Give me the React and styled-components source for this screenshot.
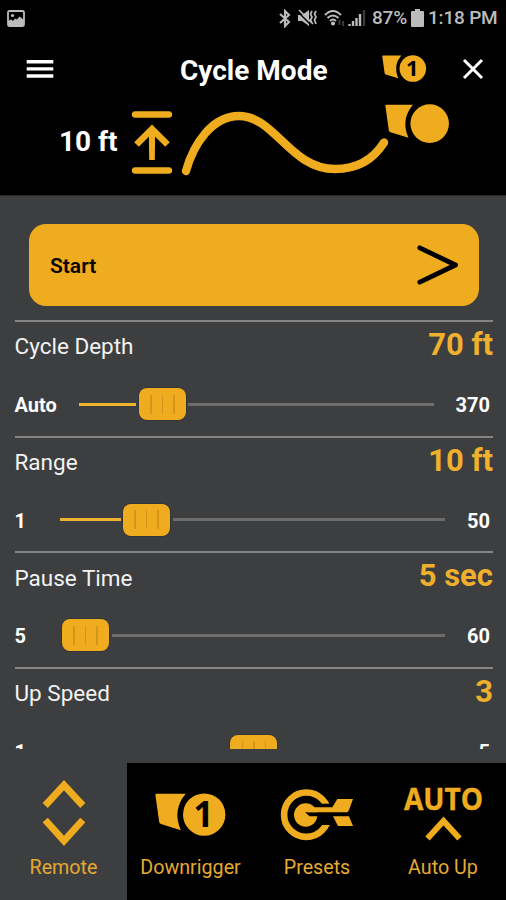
import React from "react";
import styled, {createGlobalStyle} from "styled-components";

const GOLD = "#f0ac1f";
const PANEL = "#3d3e40";

const GlobalStyle = createGlobalStyle`
    * {
        box-sizing: border-box;
    }
    body {
        margin: 0;
        background: ${PANEL};
        font-family: Roboto, "Liberation Sans", sans-serif;
    }
`;

const Screen = styled.div`
    width: 506px;
    height: 900px;
    display: flex;
    flex-direction: column;
    overflow: hidden;
    background: ${PANEL};
`;

const Header = styled.header`
    flex: 0 0 196px;
    background: #000;
    border-bottom: 1px solid #29292a;
    color: #fff;
`;

const StatusBar = styled.div`
    height: 36px;
    padding: 0 9px 0 7px;
    display: flex;
    align-items: center;
    justify-content: space-between;
    color: #bcbcbc;
`;

const StatusGroup = styled.div`
    display: flex;
    align-items: center;
    font-size: 19px;
    line-height: 36px;
    white-space: nowrap;
`;

const StatusText = styled.span`
    width: ${props => props.width}px;
    margin-left: ${props => props.gap}px;
    font-weight: 500;
    letter-spacing: -0.2px;
`;

const StatusIcon = styled.svg`
    display: block;
    flex: none;
    margin-left: ${props => props.$gap ?? 0}px;
`;

const TitleBar = styled.div`
    height: 66px;
    padding: 0 22px 0 26px;
    display: grid;
    grid-template-columns: 154px 1fr 45px 57px;
    align-items: center;
`;

const IconButton = styled.button`
    padding: 0;
    border: 0;
    background: none;
    display: flex;
    justify-content: ${props => props.align ?? "flex-start"};
    color: #fff;
`;

const Title = styled.h1`
    margin: 0;
    padding-top: 4px;
    font-size: 28px;
    line-height: 32px;
    font-weight: 700;
    white-space: nowrap;
`;

const Diagram = styled.div`
    display: flex;
    align-items: flex-start;
    height: 80px;
    padding-left: 59px;
`;

const DiagramLabel = styled.div`
    width: 73px;
    padding-top: 24px;
    font-size: 28px;
    line-height: 32px;
    font-weight: 700;
    white-space: nowrap;
`;

const DiagramArrow = styled.div`
    padding-top: 9px;
`;

const DiagramWeight = styled.div`
    padding-top: 2px;
`;

const WaveBox = styled.div`
    width: 213px;

    svg {
        overflow: visible;
    }
`;

const Content = styled.main`
    flex: 0 0 553px;
    padding: 28px 13px 0 14.5px;
    overflow: hidden;
`;

const StartButton = styled.button`
    width: 450px;
    height: 82px;
    margin: 0 0 14px 14.5px;
    padding: 0 20px 0 21px;
    display: flex;
    align-items: center;
    justify-content: space-between;
    border: 0;
    border-radius: 17px;
    background: ${GOLD};
    color: #080500;
    font-family: inherit;
    font-size: 21px;
    font-weight: 600;
`;

const StartText = styled.span`
    padding-top: 2px;
`;

const Setting = styled.section`
    height: 115.6px;
    border-top: 2px solid #858586;
`;

const SettingHead = styled.div`
    height: 64px;
    display: flex;
    justify-content: space-between;
    align-items: flex-start;
    padding-top: 4px;
`;

const SettingName = styled.span`
    padding-top: 1.4px;
    font-size: 22.5px;
    line-height: 38px;
    color: #f2f2f2;
`;

const SettingValue = styled.span`
    font-size: 31px;
    line-height: 38px;
    font-weight: 700;
    color: #efb02d;
`;

const SliderRow = styled.div`
    height: 36px;
    display: grid;
    grid-template-columns: ${props => (props.$wide ? "64px 1fr 59px" : "45px 1fr 48px")};
    align-items: center;
`;

const Bound = styled.span`
    padding: ${props => (props.$end ? "2px 3px 0 0" : "2px 0 0")};
    text-align: ${props => (props.$end ? "right" : "left")};
    font-size: 20px;
    line-height: 24px;
    font-weight: 700;
    color: #fff;
`;

const Track = styled.div`
    display: flex;
    align-items: center;
`;

const Fill = styled.div`
    height: 3px;
    width: calc((100% - 52px) * ${props => props.$ratio});
    background: #efb330;
`;

const Rest = styled.div`
    flex: 1;
    height: 3px;
    background: #6c6c6d;
`;

const Thumb = styled.div`
    flex: 0 0 47px;
    height: 32px;
    margin: 0 2.5px;
    border-radius: 8px;
    background: ${GOLD};
    box-shadow: 0 0 0 1px #333538;
    display: flex;
    align-items: center;
    justify-content: center;
    gap: 10px;
`;

const Grip = styled.span`
    width: 1.5px;
    height: 19px;
    background: #d3951c;
`;

const TabBar = styled.nav`
    margin-top: 14px;
    flex: 1;
    display: grid;
    grid-template-columns: 127px 127px 126px 126px;
`;

const Tab = styled.div`
    padding-top: 14px;
    display: flex;
    flex-direction: column;
    align-items: center;
    background: ${props => (props.$active ? PANEL : "#000")};
`;

const TabIcon = styled.div`
    height: 76px;
    margin-bottom: 1px;
    display: flex;
    align-items: center;
    justify-content: center;
`;

const TabLabel = styled.span`
    font-size: 19.7px;
    line-height: 28px;
    color: #e5a932;
`;

const IconSvg = styled.svg`
    display: block;
    overflow: visible;
`;

const Downrigger = ({width, number}) => (
    <IconSvg width={width} height={(width * 43.5) / 71} viewBox="0 0 71 43.5" fill={GOLD}>
        <path d="M1.5 .8H30.7Q17 17 25.8 37.2L6 31Q4.4 30.5 4.2 29L.4 2Q.3.8 1.5.8Z" />
        <circle cx="49.2" cy="21.6" r="21.2" />
        {number && (
            <text
                x="48.5"
                y="34"
                textAnchor="middle"
                fontFamily="'Open Sans', 'Noto Sans', sans-serif"
                fontSize="35"
                fontWeight="700"
                fill="#000"
            >
                {number}
            </text>
        )}
    </IconSvg>
);

const RangeArrow = () => (
    <svg width="40" height="64" viewBox="0 0 40 64" fill="none" stroke={GOLD}>
        <path d="M3 3.5H37M3 59.5H37" strokeWidth="6.4" strokeLinecap="round" />
        <path d="M4.5 33.5 20 18 35.5 33.5" strokeWidth="6.5" />
        <path d="M16.8 19H23.2L22.8 49H17.2Z" fill={GOLD} stroke="none" />
    </svg>
);

const Wave = () => (
    <svg width="213" height="74" viewBox="0 0 213 74" fill="none" stroke={GOLD}>
        <path
            d="M14 69C21.5 42 40 14 67 14C103 14 118 67 163 67C184 67 201 58 212 40.5"
            strokeWidth="8.4"
            strokeLinecap="round"
        />
    </svg>
);

const RemoteIcon = () => (
    <IconSvg width="44" height="68" viewBox="0 1 44 68" fill="none" stroke={GOLD} strokeWidth="7">
        <path d="M3.2 25.5 22 5.2 40.8 25.5M3.2 40 22 60.8 40.8 40" />
    </IconSvg>
);

const PresetsIcon = () => (
    <IconSvg width="74" height="52" viewBox="0 0 74 52" fill={GOLD}>
        <circle cx="26.3" cy="25.7" r="22.2" fill="none" stroke={GOLD} strokeWidth="6.6" />
        <path d="M38 14.7H54V36H38Z" fill="#000" />
        <circle cx="25.7" cy="26" r="11.7" />
        <path d="M25 23.3H70V27.3H29.5Z" fill="#000" />
        <path d="M28 18.3H52.3L57.3 10H73L69 21 67.5 23.3H28Z" />
        <path d="M53 27.3H69L73 37H58Z" />
    </IconSvg>
);

const AutoUpIcon = () => (
    <IconSvg width="82" height="58" viewBox="0 0 82 58">
        <text
            x="2"
            y="24"
            textLength="79"
            lengthAdjust="spacingAndGlyphs"
            fontFamily="'Open Sans', 'Noto Sans', sans-serif"
            fontSize="30"
            fontWeight="700"
            fill={GOLD}
            stroke={GOLD}
            strokeWidth=".4"
        >
            AUTO
        </text>
        <path d="M25.5 52.5 41.5 35 57.5 52.5" fill="none" stroke={GOLD} strokeWidth="6" />
    </IconSvg>
);

const settings = [
    {name: "Cycle Depth", value: "70 ft", min: "Auto", max: "370", ratio: 0.191, wide: true},
    {name: "Range", value: "10 ft", min: "1", max: "50", ratio: 0.183},
    {name: "Pause Time", value: "5 sec", min: "5", max: "60", ratio: 0},
    {name: "Up Speed", value: "3", min: "1", max: "5", ratio: 0.505},
];

const tabs = [
    {label: "Remote", icon: <RemoteIcon />, active: true},
    {label: "Downrigger", icon: <Downrigger width={71} number="1" />},
    {label: "Presets", icon: <PresetsIcon />},
    {label: "Auto Up", icon: <AutoUpIcon />},
];

const Status = () => (
    <StatusBar>
        <StatusIcon width="18" height="17" viewBox="0 0 18 17">
            <rect x="1" y="1" width="16" height="15" rx="1.5" fill="none" stroke="currentColor" strokeWidth="1.8" />
            <path d="M1 11 4 9.5 6 11 8 8.5 10 9.5 12.5 6.5 17 10V16H1Z" fill="currentColor" />
            <circle cx="5.5" cy="5.5" r="1.6" fill="currentColor" />
        </StatusIcon>
        <StatusGroup>
            <StatusIcon width="12" height="19" viewBox="0 0 12 19" fill="none" stroke="currentColor" strokeWidth="2.1">
                <path d="M1 5 10 13 6 17V2L10 6 1 14" />
            </StatusIcon>
            <StatusIcon $gap={6} width="21" height="18" viewBox="0 0 21 18" fill="currentColor">
                <path d="M1 6H5L12 1V17L5 12H1Z" />
                <path d="M1 3 15 17" stroke="#000" strokeWidth="1.4" />
                <path
                    d="M2 1 16 15M15 2 13.5 5 15 8 13.5 11 15 14M19 2 17.5 5 19 8 17.5 11 19 15"
                    stroke="currentColor"
                    strokeWidth="1.7"
                    fill="none"
                />
            </StatusIcon>
            <StatusIcon $gap={6} width="22" height="18" viewBox="0 0 22 18" fill="none" stroke="currentColor" strokeWidth="2">
                <path d="M1 6Q9-2 17 6M3.5 9Q9 4 14.5 9M6 12Q9 9 12 12" />
                <circle cx="9" cy="14.5" r="1.1" fill="currentColor" />
                <path d="M15.5 11V16M19 12V17" stroke="#3a3a3a" strokeWidth="2" />
            </StatusIcon>
            <StatusIcon $gap={2} width="18" height="18" viewBox="0 0 18 18" stroke="currentColor" strokeWidth="2.4">
                <path d="M1.5 17V15M5 17V12M8.5 17V9M12 17V5" />
                <path d="M16 17V1" stroke="#3a3a3a" />
            </StatusIcon>
            <StatusText gap={6} width={35}>
                87%
            </StatusText>
            <StatusIcon $gap={4} width="13" height="18" viewBox="0 0 13 18" fill="currentColor">
                <path d="M4 0H9V2H12Q13 2 13 3V17Q13 18 12 18H1Q0 18 0 17V3Q0 2 1 2H4Z" />
            </StatusIcon>
            <StatusText gap={4} width={69}>
                1:18 PM
            </StatusText>
        </StatusGroup>
    </StatusBar>
);

const Slider = ({min, max, ratio, wide}) => (
    <SliderRow $wide={wide}>
        <Bound>{min}</Bound>
        <Track>
            <Fill $ratio={ratio} />
            <Thumb>
                <Grip />
                <Grip />
                <Grip />
            </Thumb>
            <Rest />
        </Track>
        <Bound $end>{max}</Bound>
    </SliderRow>
);

const App = () => (
    <>
        <GlobalStyle />
        <Screen>
            <Header>
                <Status />
                <TitleBar>
                    <IconButton aria-label="Menu">
                        <svg width="28" height="20" viewBox="0 0 28 20" stroke="currentColor" strokeWidth="3.4">
                            <path d="M.7 2.7H27.3M.7 9.9H27.3M.7 17H27.3" />
                        </svg>
                    </IconButton>
                    <Title>Cycle Mode</Title>
                    <Downrigger width={44.5} number="1" />
                    <IconButton aria-label="Close" align="flex-end">
                        <svg width="22" height="22" viewBox="0 0 22 22" stroke="currentColor" strokeWidth="3">
                            <path d="M2 2 20 20M20 2 2 20" />
                        </svg>
                    </IconButton>
                </TitleBar>
                <Diagram>
                    <DiagramLabel>10 ft</DiagramLabel>
                    <DiagramArrow>
                        <RangeArrow />
                    </DiagramArrow>
                    <WaveBox>
                        <Wave />
                    </WaveBox>
                    <DiagramWeight>
                        <Downrigger width={64.5} />
                    </DiagramWeight>
                </Diagram>
            </Header>
            <Content>
                <StartButton>
                    <StartText>Start</StartText>
                    <svg width="42" height="42" viewBox="0 0 42 42" fill="none" stroke="#000" strokeWidth="4.8">
                        <path d="M2.8 3.8 38.5 21 2.8 38.2" strokeLinecap="round" strokeLinejoin="round" />
                    </svg>
                </StartButton>
                {settings.map(({name, value, ...slider}) => (
                    <Setting key={name}>
                        <SettingHead>
                            <SettingName>{name}</SettingName>
                            <SettingValue>{value}</SettingValue>
                        </SettingHead>
                        <Slider {...slider} />
                    </Setting>
                ))}
            </Content>
            <TabBar>
                {tabs.map(({label, icon, active}) => (
                    <Tab key={label} $active={active}>
                        <TabIcon>{icon}</TabIcon>
                        <TabLabel>{label}</TabLabel>
                    </Tab>
                ))}
            </TabBar>
        </Screen>
    </>
);

export default App;
